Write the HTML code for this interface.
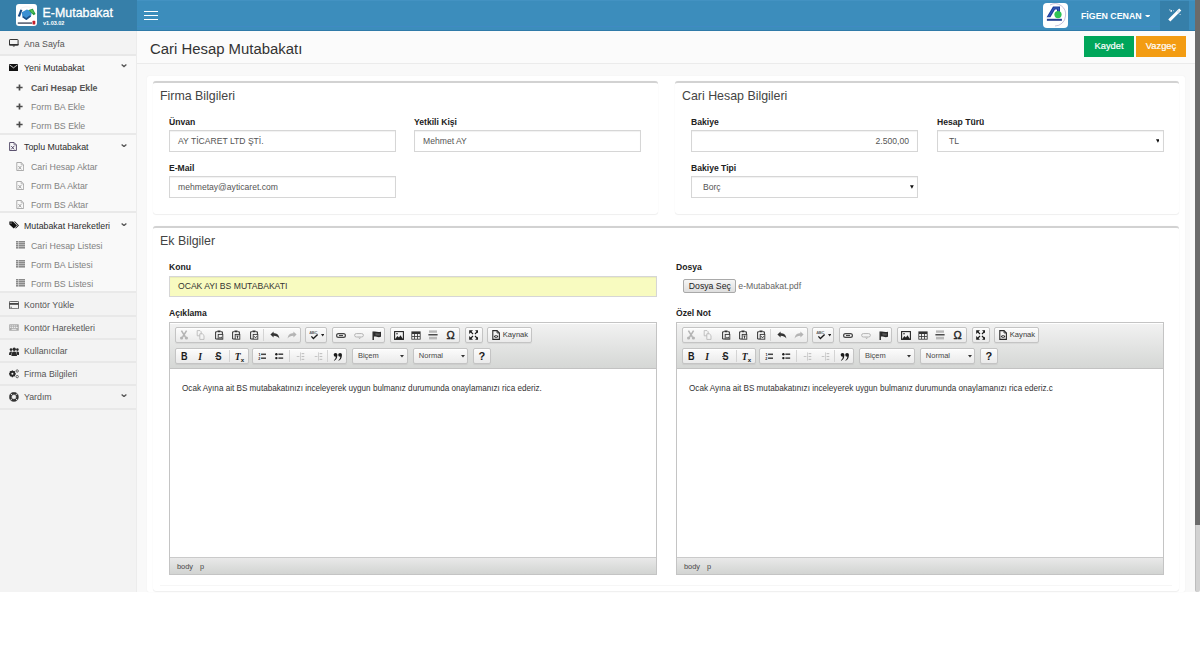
<!DOCTYPE html>
<html><head><meta charset="utf-8"><title>E-Mutabakat</title>
<style>
*{box-sizing:border-box;margin:0;padding:0}
html,body{width:1200px;height:653px;overflow:hidden;background:#fff}
body{font-family:"Liberation Sans",sans-serif;position:relative;color:#333}
.a{position:absolute}
.t{position:absolute;white-space:nowrap;line-height:1}
/* header */
#hl{left:0;top:0;width:137px;height:31px;background:#367fa9}
#hr{left:137px;top:0;width:1058px;height:31px;background:#3c8dbc}
#wand{left:1159.5px;top:0;width:29.7px;height:31px;background:#367fa9}
#sb{left:1195px;top:0;width:5px;height:592px;background:#d2d2d2;border-left:1px solid #bdbdbd;border-radius:0 0 2px 2px}
#sbt{left:1195px;top:0;width:5px;height:525px;background:#6b6b6b}
/* sidebar */
#side{left:0;top:31px;width:137px;height:561px;background:#f3f3f3;border-right:1px solid #ececec}
.sec{position:absolute;left:0;width:136px;background:#f9f9f9;border-bottom:2px solid #e9e9e9}
.it{position:absolute;left:0;width:136px;background:#f3f3f3;border-bottom:2px solid #e8e8e8}
.st{position:absolute;left:24px;font-size:8.8px;color:#555;white-space:nowrap;line-height:1}
.ss{position:absolute;left:31px;font-size:8.8px;color:#828282;white-space:nowrap;line-height:1}
/* content */
#cbg{left:137px;top:31px;width:1058px;height:561px;background:#f9f9f9}
#ph{left:137px;top:31px;width:1058px;height:33px;background:#fbfbfb;border-bottom:1px solid #ebebeb}
#panel{left:147px;top:75.5px;width:1038px;height:516px;background:#fff;border-radius:2px;box-shadow:0 0 1px #e6e6e6}
.box{position:absolute;background:#fff;border-top:2px solid #d2d2d2;border-radius:3px;box-shadow:0 1px 1px rgba(0,0,0,.06), 0 0 1px rgba(0,0,0,.08)}
.bt{position:absolute;font-size:12.4px;color:#444;white-space:nowrap;line-height:1}
.lb{position:absolute;font-size:8.6px;font-weight:bold;color:#222;white-space:nowrap;line-height:1}
.in{position:absolute;height:22px;border:1px solid #d6d6d6;background:#fff;font-size:8.6px;color:#555;line-height:21px;box-shadow:inset 0 1px 1px rgba(0,0,0,.06);padding-left:8px;white-space:nowrap}
.caret{position:absolute;width:0;height:0;border-left:2.5px solid transparent;border-right:2.5px solid transparent;border-top:4px solid #222}
.btn{position:absolute;height:21px;color:#fff;font-size:9.3px;text-align:center;line-height:21px;-webkit-text-stroke:0.2px #fff}
.ed{position:absolute;border:1px solid #c4c4c4;background:#fff}
.tb{position:absolute;background:linear-gradient(#f2f2f2,#d5d7d5);border-bottom:1px solid #c2c2c2;box-shadow:0 1px 0 #fff inset}
.bb{position:absolute;background:linear-gradient(#e9e9e9,#d2d4d2);border-top:1px solid #cacaca}
.grp{position:absolute;border:1px solid #c4c4c4;border-radius:2px;background:linear-gradient(#fcfcfc,#eaeaea);box-shadow:0 1px 0 rgba(255,255,255,.8) inset,0 1px 1px rgba(0,0,0,.06)}
</style></head><body>

<div class="a" id="cbg"></div>
<div class="a" id="ph"></div>
<div class="t" style="left:150px;top:42px;font-size:14.9px;color:#333">Cari Hesap Mutabakatı</div>
<div class="btn" style="left:1084px;top:36px;width:50px;background:#00a65a">Kaydet</div>
<div class="btn" style="left:1136px;top:36px;width:50px;background:#f39c12">Vazgeç</div>

<div class="a" id="panel"></div>

<!-- header -->
<div class="a" id="hl"></div>
<div class="a" id="hr"></div>
<div class="a" id="wand"></div>
<div class="a" style="left:137px;top:26px;width:1022px;height:1px;background:#4189c6;opacity:.7"></div>
<div class="a" style="left:137px;top:0;width:1058px;height:1px;background:#4694c4;opacity:.7"></div>
<div class="t" style="left:42.6px;top:6.8px;font-size:12.4px;color:#fff;-webkit-text-stroke:0.3px #fff">E-Mutabakat</div>
<div class="t" style="left:43px;top:21px;font-size:5.5px;font-weight:bold;color:#fff">v1.03.02</div>
<div class="a" style="left:16px;top:4px;width:21px;height:22px;background:#fff;border-radius:3px"></div>
<div class="a" style="left:144px;top:11px;width:14px;height:1.3px;background:#fff"></div>
<div class="a" style="left:144px;top:14.9px;width:14px;height:1.3px;background:#fff"></div>
<div class="a" style="left:144px;top:18.8px;width:14px;height:1.3px;background:#fff"></div>
<div class="a" style="left:1043px;top:3px;width:25px;height:25px;background:#fff;border-radius:4px"></div>
<div class="t" style="left:1081px;top:12px;font-size:8.8px;font-weight:bold;color:#fff">FİGEN CENAN</div>
<svg class="a" style="left:1144.8px;top:14.6px;width:5.4px;height:2.8px" viewBox="0 0 54 28"><path d="M0 0 H54 L27 28Z" fill="#fff"/></svg>

<div class="a" id="sb"></div>
<div class="a" id="sbt"></div>

<!-- sidebar -->
<div class="a" id="side"></div>
<div class="it" style="top:31px;height:25px"></div>
<div class="st" style="top:40px">Ana Sayfa</div>
<div class="sec" style="top:56px;height:79px"></div>
<div class="st" style="top:64px;color:#2c2c2c">Yeni Mutabakat</div>
<div class="ss" style="top:83.6px;font-weight:bold;color:#555">Cari Hesap Ekle</div>
<div class="ss" style="top:102.6px">Form BA Ekle</div>
<div class="ss" style="top:121.6px">Form BS Ekle</div>
<div class="sec" style="top:135px;height:78px"></div>
<div class="st" style="top:143px;color:#2c2c2c">Toplu Mutabakat</div>
<div class="ss" style="top:162.6px">Cari Hesap Aktar</div>
<div class="ss" style="top:181.6px">Form BA Aktar</div>
<div class="ss" style="top:200.6px">Form BS Aktar</div>
<div class="sec" style="top:213px;height:80px"></div>
<div class="st" style="top:222px;color:#2c2c2c">Mutabakat Hareketleri</div>
<div class="ss" style="top:241.6px">Cari Hesap Listesi</div>
<div class="ss" style="top:260.6px">Form BA Listesi</div>
<div class="ss" style="top:279.6px">Form BS Listesi</div>
<div class="it" style="top:293px;height:24px"></div>
<div class="st" style="top:301px">Kontör Yükle</div>
<div class="it" style="top:317px;height:23px"></div>
<div class="st" style="top:324px">Kontör Hareketleri</div>
<div class="it" style="top:340px;height:23px"></div>
<div class="st" style="top:347px">Kullanıcılar</div>
<div class="it" style="top:363px;height:23px"></div>
<div class="st" style="top:370px">Firma Bilgileri</div>
<div class="it" style="top:386px;height:24px"></div>
<div class="st" style="top:393px">Yardım</div>

<!-- Firma Bilgileri -->
<div class="box" style="left:153px;top:81px;width:505px;height:133px"></div>
<div class="bt" style="left:160px;top:89.6px">Firma Bilgileri</div>
<div class="lb" style="left:169px;top:117.5px">Ünvan</div>
<div class="in" style="left:169px;top:130px;width:227px">AY TİCARET LTD ŞTİ.</div>
<div class="lb" style="left:414px;top:117.5px">Yetkili Kişi</div>
<div class="in" style="left:414px;top:130px;width:227px">Mehmet AY</div>
<div class="lb" style="left:169px;top:163.5px">E-Mail</div>
<div class="in" style="left:169px;top:176px;width:227px">mehmetay@ayticaret.com</div>

<!-- Cari Hesap Bilgileri -->
<div class="box" style="left:675px;top:81px;width:504px;height:133px"></div>
<div class="bt" style="left:682px;top:89.6px">Cari Hesap Bilgileri</div>
<div class="lb" style="left:691px;top:117.5px">Bakiye</div>
<div class="in" style="left:691px;top:130px;width:227px;text-align:right;padding-right:8px">2.500,00</div>
<div class="lb" style="left:937px;top:117.5px">Hesap Türü</div>
<div class="in" style="left:937px;top:130px;width:227px;padding-left:11px">TL</div>
<svg class="a" style="left:1155.6px;top:139.0px;width:3.8px;height:3.8px" viewBox="0 0 38 38"><path d="M0 2 H38 L19 38Z" fill="#111"/></svg>
<div class="lb" style="left:691px;top:163.5px">Bakiye Tipi</div>
<div class="in" style="left:691px;top:176px;width:227px;padding-left:11px">Borç</div>
<svg class="a" style="left:910.0px;top:185.0px;width:3.8px;height:3.8px" viewBox="0 0 38 38"><path d="M0 2 H38 L19 38Z" fill="#111"/></svg>

<!-- Ek Bilgiler -->
<div class="box" style="left:153px;top:226px;width:1026px;height:365.3px"></div>
<div class="a" style="left:160px;top:585px;width:1012px;height:1px;background:#f6f6f6"></div>
<div class="bt" style="left:160px;top:234.6px">Ek Bilgiler</div>
<div class="lb" style="left:169px;top:262.5px">Konu</div>
<div class="in" style="left:169px;top:276px;width:488px;height:21px;background:#f8fbc0;color:#333;line-height:19px">OCAK AYI BS MUTABAKATI</div>
<div class="lb" style="left:676px;top:262.5px">Dosya</div>
<div class="lb" style="left:169px;top:308.5px">Açıklama</div>
<div class="lb" style="left:676px;top:308.5px">Özel Not</div>


<div class="a" style="left:683px;top:279.4px;width:52.5px;height:13.8px;border:1px solid #a9a9a9;border-radius:2px;background:linear-gradient(#f6f6f6,#dedede)"></div>
<div class="t" style="left:688.8px;top:282px;font-size:8.7px;color:#222">Dosya Seç</div>
<div class="t" style="left:738.3px;top:282px;font-size:8.7px;color:#666">e-Mutabakat.pdf</div>
<svg class="a" style="left:9.20px;top:39.20px;width:9.60px;height:8.20px" viewBox="0 0 96 82"><rect x="5" y="5" width="86" height="56" rx="6" fill="none" stroke="#333" stroke-width="10"/><rect x="0" y="50" width="96" height="14" fill="#333"/><path d="M36 64 H60 L56 76 H40Z" fill="#333"/></svg><svg class="a" style="left:9.20px;top:64.00px;width:9.00px;height:7.00px" viewBox="0 0 90 70"><rect x="0" y="0" width="90" height="70" fill="#111"/><path d="M4 8 L45 38 L86 8" stroke="#f7f7f7" stroke-width="8" fill="none"/></svg><svg class="a" style="left:16.30px;top:83.80px;width:7.00px;height:7.00px" viewBox="0 0 70 70"><path d="M35 4 V66 M4 35 H66" stroke="#4a4a4a" stroke-width="17"/></svg><svg class="a" style="left:16.30px;top:102.50px;width:7.00px;height:7.00px" viewBox="0 0 70 70"><path d="M35 4 V66 M4 35 H66" stroke="#4a4a4a" stroke-width="17"/></svg><svg class="a" style="left:16.30px;top:121.20px;width:7.00px;height:7.00px" viewBox="0 0 70 70"><path d="M35 4 V66 M4 35 H66" stroke="#4a4a4a" stroke-width="17"/></svg><svg class="a" style="left:9.20px;top:142.20px;width:8.00px;height:9.00px" viewBox="0 0 80 90"><path d="M6 5 H50 L74 29 V85 H6 Z" fill="none" stroke="#4a4060" stroke-width="9"/><path d="M50 5 V29 H74" fill="none" stroke="#4a4060" stroke-width="6"/><path d="M22 40 L52 74 M52 40 L22 74" stroke="#4a4060" stroke-width="9"/></svg><svg class="a" style="left:16.00px;top:162.10px;width:8.40px;height:9.00px" viewBox="0 0 80 90"><path d="M6 5 H50 L74 29 V85 H6 Z" fill="none" stroke="#999" stroke-width="8"/><path d="M50 5 V29 H74" fill="none" stroke="#999" stroke-width="6"/><path d="M22 40 L52 74 M52 40 L22 74" stroke="#999" stroke-width="9"/></svg><svg class="a" style="left:16.00px;top:181.10px;width:8.40px;height:9.00px" viewBox="0 0 80 90"><path d="M6 5 H50 L74 29 V85 H6 Z" fill="none" stroke="#999" stroke-width="8"/><path d="M50 5 V29 H74" fill="none" stroke="#999" stroke-width="6"/><path d="M22 40 L52 74 M52 40 L22 74" stroke="#999" stroke-width="9"/></svg><svg class="a" style="left:16.00px;top:200.10px;width:8.40px;height:9.00px" viewBox="0 0 80 90"><path d="M6 5 H50 L74 29 V85 H6 Z" fill="none" stroke="#999" stroke-width="8"/><path d="M50 5 V29 H74" fill="none" stroke="#999" stroke-width="6"/><path d="M22 40 L52 74 M52 40 L22 74" stroke="#999" stroke-width="9"/></svg><svg class="a" style="left:8.50px;top:220.60px;width:10.40px;height:8.60px" viewBox="0 0 104 86"><path d="M4 4 H40 L80 44 L48 76 L4 34 Z" fill="#111"/><circle cx="20" cy="20" r="6" fill="#f7f7f7"/><path d="M50 4 H60 L100 44 L68 76 L62 70 L88 44Z" fill="#111"/></svg><svg class="a" style="left:16.00px;top:241.20px;width:9.00px;height:7.60px" viewBox="0 0 90 76"><g fill="#8a8a8a"><rect x="0" y="0" width="22" height="16"/><rect x="0" y="20" width="22" height="16"/><rect x="0" y="40" width="22" height="16"/><rect x="0" y="60" width="22" height="16"/><rect x="26" y="0" width="64" height="16"/><rect x="26" y="20" width="64" height="16"/><rect x="26" y="40" width="64" height="16"/><rect x="26" y="60" width="64" height="16"/></g></svg><svg class="a" style="left:16.00px;top:260.20px;width:9.00px;height:7.60px" viewBox="0 0 90 76"><g fill="#8a8a8a"><rect x="0" y="0" width="22" height="16"/><rect x="0" y="20" width="22" height="16"/><rect x="0" y="40" width="22" height="16"/><rect x="0" y="60" width="22" height="16"/><rect x="26" y="0" width="64" height="16"/><rect x="26" y="20" width="64" height="16"/><rect x="26" y="40" width="64" height="16"/><rect x="26" y="60" width="64" height="16"/></g></svg><svg class="a" style="left:16.00px;top:279.20px;width:9.00px;height:7.60px" viewBox="0 0 90 76"><g fill="#8a8a8a"><rect x="0" y="0" width="22" height="16"/><rect x="0" y="20" width="22" height="16"/><rect x="0" y="40" width="22" height="16"/><rect x="0" y="60" width="22" height="16"/><rect x="26" y="0" width="64" height="16"/><rect x="26" y="20" width="64" height="16"/><rect x="26" y="40" width="64" height="16"/><rect x="26" y="60" width="64" height="16"/></g></svg><svg class="a" style="left:9.00px;top:300.80px;width:10.00px;height:8.20px" viewBox="0 0 100 82"><rect x="4" y="4" width="92" height="74" rx="8" fill="none" stroke="#444" stroke-width="9"/><rect x="4" y="20" width="92" height="18" fill="#444"/><rect x="14" y="58" width="16" height="8" fill="#444"/></svg><svg class="a" style="left:9.00px;top:324.30px;width:10.00px;height:7.00px" viewBox="0 0 100 70"><rect x="2" y="2" width="96" height="66" rx="6" fill="#aaa"/><g fill="#eee"><rect x="12" y="14" width="12" height="10"/><rect x="30" y="14" width="12" height="10"/><rect x="48" y="14" width="12" height="10"/><rect x="66" y="14" width="12" height="10"/><rect x="12" y="30" width="12" height="10"/><rect x="30" y="30" width="12" height="10"/><rect x="48" y="30" width="12" height="10"/><rect x="66" y="30" width="20" height="10"/><rect x="26" y="48" width="48" height="10"/></g></svg><svg class="a" style="left:9.00px;top:346.60px;width:10.40px;height:9.00px" viewBox="0 0 104 90"><g fill="#2a2a2a"><circle cx="52" cy="22" r="17"/><circle cx="20" cy="26" r="13"/><circle cx="84" cy="26" r="13"/><path d="M24 90 C24 56 34 44 52 44 C70 44 80 56 80 90Z"/><path d="M0 80 C0 54 8 44 20 44 C28 44 32 48 32 48 C26 58 22 68 22 80Z"/><path d="M104 80 C104 54 96 44 84 44 C76 44 72 48 72 48 C78 58 82 68 82 80Z"/></g></svg><svg class="a" style="left:9.00px;top:369.20px;width:10.40px;height:9.40px" viewBox="0 0 104 94"><circle cx="34" cy="48" r="22" fill="none" stroke="#2a2a2a" stroke-width="16"/><g stroke="#2a2a2a" stroke-width="12"><path d="M34 14 V82 M0 48 H68 M10 24 L58 72 M58 24 L10 72"/></g><circle cx="34" cy="48" r="10" fill="#f3f3f3"/><circle cx="82" cy="20" r="12" fill="none" stroke="#555" stroke-width="9"/><circle cx="82" cy="76" r="12" fill="none" stroke="#555" stroke-width="9"/></svg><svg class="a" style="left:9.00px;top:392.00px;width:9.80px;height:9.80px" viewBox="0 0 100 100"><circle cx="50" cy="50" r="36" fill="none" stroke="#333" stroke-width="22"/><circle cx="50" cy="50" r="14" fill="#f3f3f3"/><g stroke="#f3f3f3" stroke-width="9"><path d="M36 36 L14 14 M64 36 L86 14 M36 64 L14 86 M64 64 L86 86"/></g><circle cx="50" cy="50" r="48" fill="none" stroke="#333" stroke-width="4"/><circle cx="50" cy="50" r="24" fill="none" stroke="#333" stroke-width="4"/></svg><svg class="a" style="left:121.00px;top:64.20px;width:6.00px;height:3.40px" viewBox="0 0 60 34"><path d="M6 6 L30 26 L54 6" stroke="#555" stroke-width="13" fill="none"/></svg><svg class="a" style="left:121.00px;top:143.60px;width:6.00px;height:3.40px" viewBox="0 0 60 34"><path d="M6 6 L30 26 L54 6" stroke="#555" stroke-width="13" fill="none"/></svg><svg class="a" style="left:121.00px;top:222.80px;width:6.00px;height:3.40px" viewBox="0 0 60 34"><path d="M6 6 L30 26 L54 6" stroke="#555" stroke-width="13" fill="none"/></svg><svg class="a" style="left:121.00px;top:393.80px;width:6.00px;height:3.40px" viewBox="0 0 60 34"><path d="M6 6 L30 26 L54 6" stroke="#555" stroke-width="13" fill="none"/></svg><svg class="a" style="left:16.00px;top:4.00px;width:21.30px;height:22.00px" viewBox="0 0 213 220"><path d="M50 45 C80 22 140 22 175 50" stroke="#e4e4e4" stroke-width="4" fill="none"/><path d="M58 82 L108 56 L160 72 L150 125 L104 160 L64 132Z" fill="#3a8fd2"/><path d="M64 132 L104 160 L150 125 L140 112 L102 140 L74 120Z" fill="#1c4f86"/><path d="M18 122 L44 56 L64 60 L40 128Z" fill="#1a4a82"/><path d="M126 60 L168 48 L196 100 L176 112 L150 84Z" fill="#239a3c"/><path d="M140 64 L164 58 L182 92 L160 88Z" fill="#52c05a"/><rect x="18" y="183" width="142" height="16" fill="#5b6273"/><rect x="165" y="168" width="28" height="36" rx="6" fill="#c4202c"/></svg><svg class="a" style="left:1043.00px;top:3.30px;width:25.00px;height:24.50px" viewBox="0 0 250 245"><path d="M70 20 A106 106 0 0 1 225 130 A106 106 0 0 1 120 230" stroke="#8f84b8" stroke-width="5" fill="none"/><path d="M36 142 L100 36 L170 36 L170 90 L140 90 L140 64 L120 64 L74 142Z" fill="#1c3c9c"/><path d="M56 138 L110 50 L156 50 L156 80" stroke="#5d8fe0" stroke-width="4" fill="none"/><circle cx="150" cy="116" r="36" fill="#2fc455"/><rect x="39" y="158" width="150" height="20" fill="#233f8f"/></svg><svg class="a" style="left:1166.50px;top:6.50px;width:15.00px;height:15.00px" viewBox="0 0 160 160"><path d="M36 132 L130 38" stroke="#fff" stroke-width="32" stroke-linecap="square"/><path d="M110 58 L130 38" stroke="#dfe8f0" stroke-width="30"/><circle cx="45" cy="42" r="9" fill="#fff"/><circle cx="30" cy="30" r="6" fill="#dfeaf5"/><circle cx="70" cy="40" r="5" fill="#fff"/><circle cx="140" cy="80" r="6" fill="#dfeaf5"/></svg><div class="a" style="left:0;top:30px;width:1195px;height:1px;background:#2f7aa8"></div><div class="ed" style="left:169px;top:322px;width:488px;height:253px"></div><div class="tb" style="left:170px;top:323px;width:486px;height:45.5px"></div><div class="a" style="left:170px;top:368.5px;width:486px;height:188.5px;background:#fff"></div><div class="bb" style="left:170px;top:557px;width:486px;height:17px"></div><div class="grp" style="left:174.50px;top:326.80px;width:126.30px;height:16.6px"></div><div class="grp" style="left:305.40px;top:326.80px;width:22.10px;height:16.6px"></div><div class="grp" style="left:332.00px;top:326.80px;width:53.00px;height:16.6px"></div><div class="grp" style="left:389.60px;top:326.80px;width:70.80px;height:16.6px"></div><div class="grp" style="left:464.60px;top:326.80px;width:18.00px;height:16.6px"></div><div class="grp" style="left:487.00px;top:326.80px;width:45.00px;height:16.6px"></div><div class="grp" style="left:174.50px;top:347.90px;width:74.00px;height:16.6px"></div><div class="grp" style="left:252.20px;top:347.90px;width:94.80px;height:16.6px"></div><div class="grp" style="left:351.70px;top:347.90px;width:56.20px;height:16.6px"></div><div class="grp" style="left:412.50px;top:347.90px;width:55.80px;height:16.6px"></div><div class="grp" style="left:472.50px;top:347.90px;width:18.30px;height:16.6px"></div><div class="a" style="left:263.00px;top:329.30px;width:1px;height:11.5px;background:#d4d4d4"></div><div class="a" style="left:229.00px;top:350.40px;width:1px;height:11.5px;background:#d4d4d4"></div><div class="a" style="left:289.30px;top:350.40px;width:1px;height:11.5px;background:#d4d4d4"></div><div class="a" style="left:327.20px;top:350.40px;width:1px;height:11.5px;background:#d4d4d4"></div><svg class="a" style="left:179.30px;top:330.00px;width:10px;height:10px" viewBox="0 0 100 100"><g stroke="#b4b4b4" stroke-width="15" fill="none"><path d="M24 6 L64 70 M76 6 L36 70"/></g><g fill="#b4b4b4"><circle cx="26" cy="80" r="16"/><circle cx="74" cy="80" r="16"/></g></svg><svg class="a" style="left:195.90px;top:330.00px;width:10px;height:10px" viewBox="0 0 100 100"><g stroke="#b4b4b4" stroke-width="8" fill="none"><path d="M12 6 H40 L52 18 V58 H12 Z"/><path d="M38 38 H64 L80 54 V94 H38 Z" fill="#f4f4f4"/></g></svg><svg class="a" style="left:213.80px;top:330.00px;width:10px;height:10px" viewBox="0 0 100 100"><g fill="none" stroke="#333" stroke-width="10"><path d="M30 18 H16 V90 H40"/><path d="M70 18 H84 V40"/></g><rect x="32" y="6" width="36" height="16" rx="6" fill="#333"/><rect x="42" y="44" width="46" height="48" fill="none" stroke="#333" stroke-width="9"/><path d="M48 86 L58 68 L66 78 L72 64 L84 86Z" fill="#333"/></svg><svg class="a" style="left:231.30px;top:330.00px;width:10px;height:10px" viewBox="0 0 100 100"><g fill="none" stroke="#333" stroke-width="10"><path d="M30 18 H16 V90 H40"/><path d="M70 18 H84 V40"/></g><rect x="32" y="6" width="36" height="16" rx="6" fill="#333"/><rect x="42" y="44" width="46" height="48" fill="none" stroke="#333" stroke-width="9"/><path d="M54 60 H76 M65 60 V86" stroke="#333" stroke-width="9"/></svg><svg class="a" style="left:248.80px;top:330.00px;width:10px;height:10px" viewBox="0 0 100 100"><g fill="none" stroke="#333" stroke-width="10"><path d="M30 18 H16 V90 H40"/><path d="M70 18 H84 V40"/></g><rect x="32" y="6" width="36" height="16" rx="6" fill="#333"/><rect x="42" y="44" width="46" height="48" fill="none" stroke="#333" stroke-width="9"/><path d="M50 62 L65 78 L80 62" stroke="#333" stroke-width="10" fill="none"/></svg><svg class="a" style="left:269.60px;top:330.00px;width:10px;height:10px" viewBox="0 0 100 100"><path d="M4 44 L36 14 V32 C64 32 90 44 94 86 C80 66 62 58 36 58 V76 Z" fill="#333"/></svg><svg class="a" style="left:286.70px;top:330.00px;width:10px;height:10px" viewBox="0 0 100 100"><path d="M96 44 L64 14 V32 C36 32 10 44 6 86 C20 66 38 58 64 58 V76 Z" fill="#b4b4b4"/></svg><svg class="a" style="left:309.00px;top:330.00px;width:10px;height:10px" viewBox="0 0 100 100"><text x="2" y="40" font-family="Liberation Sans" font-weight="bold" font-size="40" fill="#666" textLength="82">ABC</text><path d="M24 64 L44 86 L86 46" stroke="#1a1a1a" stroke-width="14" fill="none"/></svg><svg class="a" style="left:320.60px;top:334.20px;width:3.4px;height:2.4px" viewBox="0 0 34 24"><path d="M0 0 H34 L17 24Z" fill="#222"/></svg><svg class="a" style="left:336.10px;top:332.50px;width:10px;height:5px" viewBox="0 0 100 50"><rect x="6" y="6" width="88" height="38" rx="19" fill="none" stroke="#444" stroke-width="12"/><rect x="30" y="19" width="40" height="12" fill="#444"/></svg><svg class="a" style="left:353.90px;top:332.50px;width:10px;height:6.6px" viewBox="0 0 100 66"><rect x="6" y="6" width="88" height="34" rx="17" fill="none" stroke="#b4b4b4" stroke-width="10"/><path d="M48 44 L64 62 M64 44 L48 62" stroke="#b4b4b4" stroke-width="8"/></svg><svg class="a" style="left:371.60px;top:330.50px;width:9px;height:9px" viewBox="0 0 90 90"><path d="M12 4 V96" stroke="#222" stroke-width="14"/><path d="M16 8 C36 0 56 18 92 6 V58 C58 70 38 50 16 58 Z" fill="#2a2a2a"/><path d="M34 20 C50 22 62 28 78 22 V44 C62 50 50 42 34 42Z" fill="#555"/></svg><svg class="a" style="left:393.80px;top:330.50px;width:10px;height:9px" viewBox="0 0 100 90"><rect x="6" y="6" width="88" height="78" fill="none" stroke="#222" stroke-width="11"/><path d="M12 80 L34 50 L50 66 L64 42 L90 80 Z" fill="#222"/><circle cx="30" cy="28" r="8" fill="#222"/></svg><svg class="a" style="left:411.30px;top:330.50px;width:10px;height:9px" viewBox="0 0 100 90"><rect x="4" y="4" width="92" height="82" fill="#333"/><g fill="#f0f0f0"><rect x="12" y="30" width="20" height="20"/><rect x="40" y="30" width="20" height="20"/><rect x="68" y="30" width="20" height="20"/><rect x="12" y="58" width="20" height="20"/><rect x="40" y="58" width="20" height="20"/><rect x="68" y="58" width="20" height="20"/></g></svg><svg class="a" style="left:428.30px;top:330.00px;width:10px;height:10px" viewBox="0 0 100 100"><rect x="10" y="4" width="80" height="24" fill="#b8b8b8"/><rect x="4" y="42" width="92" height="12" fill="#222"/><rect x="10" y="68" width="80" height="26" fill="#b8b8b8"/></svg><div class="t" style="left:446.60px;top:330.00px;font-size:11px;color:#1a1a1a;-webkit-text-stroke:0.35px #1a1a1a">Ω</div><svg class="a" style="left:468.50px;top:330.20px;width:9.6px;height:9.6px" viewBox="0 0 96 96"><g fill="#1a1a1a"><path d="M2 2 H40 L2 40Z"/><path d="M98 2 H60 L98 40Z"/><path d="M2 98 H40 L2 60Z"/><path d="M98 98 H60 L98 60Z"/></g><g stroke="#1a1a1a" stroke-width="12"><path d="M14 14 L40 40 M86 14 L60 40 M14 86 L40 60 M86 86 L60 60"/></g></svg><svg class="a" style="left:491.80px;top:330.00px;width:8px;height:10px" viewBox="0 0 80 100"><path d="M8 6 H50 L74 30 V94 H8 Z" fill="none" stroke="#2a2a2a" stroke-width="11"/><path d="M50 6 V30 H74" fill="none" stroke="#2a2a2a" stroke-width="8"/><path d="M18 66 C28 48 54 48 64 66 C54 84 28 84 18 66Z" fill="#2a2a2a"/><circle cx="41" cy="66" r="8" fill="#eee"/></svg><div class="t" style="left:502.80px;top:330.60px;font-size:7.6px;color:#3a3a3a">Kaynak</div><div class="t" style="left:181.00px;top:352.80px;font-size:9.1px;font-weight:bold;color:#1a1a1a;transform:scaleY(1.13);transform-origin:0 100%;">B</div><div class="t" style="left:198.20px;top:351.60px;font-size:9.6px;font-weight:bold;font-style:italic;font-family:'Liberation Serif';color:#1a1a1a;transform:scaleY(1.13);transform-origin:0 100%;">I</div><div class="t" style="left:215.60px;top:352.80px;font-size:9.1px;font-weight:bold;color:#1a1a1a;transform:scaleY(1.13);transform-origin:0 100%;">S</div><div class="a" style="left:214.80px;top:356.40px;width:4px;height:0.8px;background:#555"></div><div class="t" style="left:234.80px;top:351.60px;font-size:9.6px;font-weight:bold;font-style:italic;font-family:'Liberation Serif';color:#1a1a1a;transform:scaleY(1.13);transform-origin:0 100%;">T</div><div class="t" style="left:240.80px;top:356.80px;font-size:6.2px;font-weight:bold;color:#1a1a1a">x</div><svg class="a" style="left:257.55px;top:351.95px;width:8.5px;height:8.5px" viewBox="0 0 100 100"><text x="6" y="42" font-family="Liberation Sans" font-weight="bold" font-size="44" fill="#222">1</text><text x="2" y="96" font-family="Liberation Sans" font-weight="bold" font-size="44" fill="#222">2</text><rect x="36" y="18" width="58" height="18" fill="#444"/><rect x="36" y="64" width="58" height="18" fill="#444"/></svg><svg class="a" style="left:275.35px;top:351.95px;width:8.5px;height:8.5px" viewBox="0 0 100 100"><circle cx="16" cy="26" r="14" fill="#1a1a1a"/><circle cx="16" cy="72" r="14" fill="#1a1a1a"/><rect x="40" y="17" width="56" height="18" fill="#444"/><rect x="40" y="63" width="56" height="18" fill="#444"/></svg><svg class="a" style="left:296.30px;top:351.70px;width:9px;height:9px" viewBox="0 0 100 100"><g fill="#c0c0c0"><rect x="46" y="4" width="8" height="92"/><rect x="62" y="12" width="30" height="12"/><rect x="62" y="44" width="30" height="12"/><rect x="62" y="76" width="30" height="12"/><rect x="8" y="45" width="30" height="10"/></g></svg><svg class="a" style="left:313.80px;top:351.70px;width:9px;height:9px" viewBox="0 0 100 100"><g fill="#c0c0c0"><rect x="46" y="4" width="8" height="92"/><rect x="62" y="12" width="30" height="12"/><rect x="62" y="44" width="30" height="12"/><rect x="62" y="76" width="30" height="12"/><rect x="8" y="45" width="30" height="10"/></g></svg><svg class="a" style="left:333.20px;top:351.70px;width:10px;height:9.4px" viewBox="0 0 100 100"><g fill="#1a1a1a"><circle cx="24" cy="30" r="20"/><path d="M42 32 C44 66 30 86 6 96 L10 84 C22 74 28 62 26 44Z"/><circle cx="72" cy="30" r="20"/><path d="M90 32 C92 66 78 86 54 96 L58 84 C70 74 76 62 74 44Z"/></g></svg><div class="t" style="left:357.90px;top:351.90px;font-size:7.5px;color:#484848">Biçem</div><svg class="a" style="left:400.20px;top:355.40px;width:4px;height:2.6px" viewBox="0 0 40 26"><path d="M0 0 H40 L20 26Z" fill="#333"/></svg><div class="t" style="left:418.80px;top:351.90px;font-size:7.5px;color:#484848">Normal</div><svg class="a" style="left:460.60px;top:355.40px;width:4px;height:2.6px" viewBox="0 0 40 26"><path d="M0 0 H40 L20 26Z" fill="#333"/></svg><div class="t" style="left:478.40px;top:350.60px;font-size:11px;font-weight:bold;color:#1a1a1a">?</div><div class="t" style="left:182px;top:384.8px;font-size:8.14px;color:#333">Ocak Ayına ait BS mutabakatınızı inceleyerek uygun bulmanız durumunda onaylamanızı rica ederiz.</div><div class="t" style="left:177px;top:562.5px;font-size:7.4px;color:#484848">body</div><div class="t" style="left:200px;top:562.5px;font-size:7.4px;color:#484848">p</div><div class="ed" style="left:676px;top:322px;width:488px;height:253px"></div><div class="tb" style="left:677px;top:323px;width:486px;height:45.5px"></div><div class="a" style="left:677px;top:368.5px;width:486px;height:188.5px;background:#fff"></div><div class="bb" style="left:677px;top:557px;width:486px;height:17px"></div><div class="grp" style="left:681.50px;top:326.80px;width:126.30px;height:16.6px"></div><div class="grp" style="left:812.40px;top:326.80px;width:22.10px;height:16.6px"></div><div class="grp" style="left:839.00px;top:326.80px;width:53.00px;height:16.6px"></div><div class="grp" style="left:896.60px;top:326.80px;width:70.80px;height:16.6px"></div><div class="grp" style="left:971.60px;top:326.80px;width:18.00px;height:16.6px"></div><div class="grp" style="left:994.00px;top:326.80px;width:45.00px;height:16.6px"></div><div class="grp" style="left:681.50px;top:347.90px;width:74.00px;height:16.6px"></div><div class="grp" style="left:759.20px;top:347.90px;width:94.80px;height:16.6px"></div><div class="grp" style="left:858.70px;top:347.90px;width:56.20px;height:16.6px"></div><div class="grp" style="left:919.50px;top:347.90px;width:55.80px;height:16.6px"></div><div class="grp" style="left:979.50px;top:347.90px;width:18.30px;height:16.6px"></div><div class="a" style="left:770.00px;top:329.30px;width:1px;height:11.5px;background:#d4d4d4"></div><div class="a" style="left:736.00px;top:350.40px;width:1px;height:11.5px;background:#d4d4d4"></div><div class="a" style="left:796.30px;top:350.40px;width:1px;height:11.5px;background:#d4d4d4"></div><div class="a" style="left:834.20px;top:350.40px;width:1px;height:11.5px;background:#d4d4d4"></div><svg class="a" style="left:686.30px;top:330.00px;width:10px;height:10px" viewBox="0 0 100 100"><g stroke="#b4b4b4" stroke-width="15" fill="none"><path d="M24 6 L64 70 M76 6 L36 70"/></g><g fill="#b4b4b4"><circle cx="26" cy="80" r="16"/><circle cx="74" cy="80" r="16"/></g></svg><svg class="a" style="left:702.90px;top:330.00px;width:10px;height:10px" viewBox="0 0 100 100"><g stroke="#b4b4b4" stroke-width="8" fill="none"><path d="M12 6 H40 L52 18 V58 H12 Z"/><path d="M38 38 H64 L80 54 V94 H38 Z" fill="#f4f4f4"/></g></svg><svg class="a" style="left:720.80px;top:330.00px;width:10px;height:10px" viewBox="0 0 100 100"><g fill="none" stroke="#333" stroke-width="10"><path d="M30 18 H16 V90 H40"/><path d="M70 18 H84 V40"/></g><rect x="32" y="6" width="36" height="16" rx="6" fill="#333"/><rect x="42" y="44" width="46" height="48" fill="none" stroke="#333" stroke-width="9"/><path d="M48 86 L58 68 L66 78 L72 64 L84 86Z" fill="#333"/></svg><svg class="a" style="left:738.30px;top:330.00px;width:10px;height:10px" viewBox="0 0 100 100"><g fill="none" stroke="#333" stroke-width="10"><path d="M30 18 H16 V90 H40"/><path d="M70 18 H84 V40"/></g><rect x="32" y="6" width="36" height="16" rx="6" fill="#333"/><rect x="42" y="44" width="46" height="48" fill="none" stroke="#333" stroke-width="9"/><path d="M54 60 H76 M65 60 V86" stroke="#333" stroke-width="9"/></svg><svg class="a" style="left:755.80px;top:330.00px;width:10px;height:10px" viewBox="0 0 100 100"><g fill="none" stroke="#333" stroke-width="10"><path d="M30 18 H16 V90 H40"/><path d="M70 18 H84 V40"/></g><rect x="32" y="6" width="36" height="16" rx="6" fill="#333"/><rect x="42" y="44" width="46" height="48" fill="none" stroke="#333" stroke-width="9"/><path d="M50 62 L65 78 L80 62" stroke="#333" stroke-width="10" fill="none"/></svg><svg class="a" style="left:776.60px;top:330.00px;width:10px;height:10px" viewBox="0 0 100 100"><path d="M4 44 L36 14 V32 C64 32 90 44 94 86 C80 66 62 58 36 58 V76 Z" fill="#333"/></svg><svg class="a" style="left:793.70px;top:330.00px;width:10px;height:10px" viewBox="0 0 100 100"><path d="M96 44 L64 14 V32 C36 32 10 44 6 86 C20 66 38 58 64 58 V76 Z" fill="#b4b4b4"/></svg><svg class="a" style="left:816.00px;top:330.00px;width:10px;height:10px" viewBox="0 0 100 100"><text x="2" y="40" font-family="Liberation Sans" font-weight="bold" font-size="40" fill="#666" textLength="82">ABC</text><path d="M24 64 L44 86 L86 46" stroke="#1a1a1a" stroke-width="14" fill="none"/></svg><svg class="a" style="left:827.60px;top:334.20px;width:3.4px;height:2.4px" viewBox="0 0 34 24"><path d="M0 0 H34 L17 24Z" fill="#222"/></svg><svg class="a" style="left:843.10px;top:332.50px;width:10px;height:5px" viewBox="0 0 100 50"><rect x="6" y="6" width="88" height="38" rx="19" fill="none" stroke="#444" stroke-width="12"/><rect x="30" y="19" width="40" height="12" fill="#444"/></svg><svg class="a" style="left:860.90px;top:332.50px;width:10px;height:6.6px" viewBox="0 0 100 66"><rect x="6" y="6" width="88" height="34" rx="17" fill="none" stroke="#b4b4b4" stroke-width="10"/><path d="M48 44 L64 62 M64 44 L48 62" stroke="#b4b4b4" stroke-width="8"/></svg><svg class="a" style="left:878.60px;top:330.50px;width:9px;height:9px" viewBox="0 0 90 90"><path d="M12 4 V96" stroke="#222" stroke-width="14"/><path d="M16 8 C36 0 56 18 92 6 V58 C58 70 38 50 16 58 Z" fill="#2a2a2a"/><path d="M34 20 C50 22 62 28 78 22 V44 C62 50 50 42 34 42Z" fill="#555"/></svg><svg class="a" style="left:900.80px;top:330.50px;width:10px;height:9px" viewBox="0 0 100 90"><rect x="6" y="6" width="88" height="78" fill="none" stroke="#222" stroke-width="11"/><path d="M12 80 L34 50 L50 66 L64 42 L90 80 Z" fill="#222"/><circle cx="30" cy="28" r="8" fill="#222"/></svg><svg class="a" style="left:918.30px;top:330.50px;width:10px;height:9px" viewBox="0 0 100 90"><rect x="4" y="4" width="92" height="82" fill="#333"/><g fill="#f0f0f0"><rect x="12" y="30" width="20" height="20"/><rect x="40" y="30" width="20" height="20"/><rect x="68" y="30" width="20" height="20"/><rect x="12" y="58" width="20" height="20"/><rect x="40" y="58" width="20" height="20"/><rect x="68" y="58" width="20" height="20"/></g></svg><svg class="a" style="left:935.30px;top:330.00px;width:10px;height:10px" viewBox="0 0 100 100"><rect x="10" y="4" width="80" height="24" fill="#b8b8b8"/><rect x="4" y="42" width="92" height="12" fill="#222"/><rect x="10" y="68" width="80" height="26" fill="#b8b8b8"/></svg><div class="t" style="left:953.60px;top:330.00px;font-size:11px;color:#1a1a1a;-webkit-text-stroke:0.35px #1a1a1a">Ω</div><svg class="a" style="left:975.50px;top:330.20px;width:9.6px;height:9.6px" viewBox="0 0 96 96"><g fill="#1a1a1a"><path d="M2 2 H40 L2 40Z"/><path d="M98 2 H60 L98 40Z"/><path d="M2 98 H40 L2 60Z"/><path d="M98 98 H60 L98 60Z"/></g><g stroke="#1a1a1a" stroke-width="12"><path d="M14 14 L40 40 M86 14 L60 40 M14 86 L40 60 M86 86 L60 60"/></g></svg><svg class="a" style="left:998.80px;top:330.00px;width:8px;height:10px" viewBox="0 0 80 100"><path d="M8 6 H50 L74 30 V94 H8 Z" fill="none" stroke="#2a2a2a" stroke-width="11"/><path d="M50 6 V30 H74" fill="none" stroke="#2a2a2a" stroke-width="8"/><path d="M18 66 C28 48 54 48 64 66 C54 84 28 84 18 66Z" fill="#2a2a2a"/><circle cx="41" cy="66" r="8" fill="#eee"/></svg><div class="t" style="left:1009.80px;top:330.60px;font-size:7.6px;color:#3a3a3a">Kaynak</div><div class="t" style="left:688.00px;top:352.80px;font-size:9.1px;font-weight:bold;color:#1a1a1a;transform:scaleY(1.13);transform-origin:0 100%;">B</div><div class="t" style="left:705.20px;top:351.60px;font-size:9.6px;font-weight:bold;font-style:italic;font-family:'Liberation Serif';color:#1a1a1a;transform:scaleY(1.13);transform-origin:0 100%;">I</div><div class="t" style="left:722.60px;top:352.80px;font-size:9.1px;font-weight:bold;color:#1a1a1a;transform:scaleY(1.13);transform-origin:0 100%;">S</div><div class="a" style="left:721.80px;top:356.40px;width:4px;height:0.8px;background:#555"></div><div class="t" style="left:741.80px;top:351.60px;font-size:9.6px;font-weight:bold;font-style:italic;font-family:'Liberation Serif';color:#1a1a1a;transform:scaleY(1.13);transform-origin:0 100%;">T</div><div class="t" style="left:747.80px;top:356.80px;font-size:6.2px;font-weight:bold;color:#1a1a1a">x</div><svg class="a" style="left:764.55px;top:351.95px;width:8.5px;height:8.5px" viewBox="0 0 100 100"><text x="6" y="42" font-family="Liberation Sans" font-weight="bold" font-size="44" fill="#222">1</text><text x="2" y="96" font-family="Liberation Sans" font-weight="bold" font-size="44" fill="#222">2</text><rect x="36" y="18" width="58" height="18" fill="#444"/><rect x="36" y="64" width="58" height="18" fill="#444"/></svg><svg class="a" style="left:782.35px;top:351.95px;width:8.5px;height:8.5px" viewBox="0 0 100 100"><circle cx="16" cy="26" r="14" fill="#1a1a1a"/><circle cx="16" cy="72" r="14" fill="#1a1a1a"/><rect x="40" y="17" width="56" height="18" fill="#444"/><rect x="40" y="63" width="56" height="18" fill="#444"/></svg><svg class="a" style="left:803.30px;top:351.70px;width:9px;height:9px" viewBox="0 0 100 100"><g fill="#c0c0c0"><rect x="46" y="4" width="8" height="92"/><rect x="62" y="12" width="30" height="12"/><rect x="62" y="44" width="30" height="12"/><rect x="62" y="76" width="30" height="12"/><rect x="8" y="45" width="30" height="10"/></g></svg><svg class="a" style="left:820.80px;top:351.70px;width:9px;height:9px" viewBox="0 0 100 100"><g fill="#c0c0c0"><rect x="46" y="4" width="8" height="92"/><rect x="62" y="12" width="30" height="12"/><rect x="62" y="44" width="30" height="12"/><rect x="62" y="76" width="30" height="12"/><rect x="8" y="45" width="30" height="10"/></g></svg><svg class="a" style="left:840.20px;top:351.70px;width:10px;height:9.4px" viewBox="0 0 100 100"><g fill="#1a1a1a"><circle cx="24" cy="30" r="20"/><path d="M42 32 C44 66 30 86 6 96 L10 84 C22 74 28 62 26 44Z"/><circle cx="72" cy="30" r="20"/><path d="M90 32 C92 66 78 86 54 96 L58 84 C70 74 76 62 74 44Z"/></g></svg><div class="t" style="left:864.90px;top:351.90px;font-size:7.5px;color:#484848">Biçem</div><svg class="a" style="left:907.20px;top:355.40px;width:4px;height:2.6px" viewBox="0 0 40 26"><path d="M0 0 H40 L20 26Z" fill="#333"/></svg><div class="t" style="left:925.80px;top:351.90px;font-size:7.5px;color:#484848">Normal</div><svg class="a" style="left:967.60px;top:355.40px;width:4px;height:2.6px" viewBox="0 0 40 26"><path d="M0 0 H40 L20 26Z" fill="#333"/></svg><div class="t" style="left:985.40px;top:350.60px;font-size:11px;font-weight:bold;color:#1a1a1a">?</div><div class="t" style="left:689px;top:384.8px;font-size:8.14px;color:#333">Ocak Ayına ait BS mutabakatınızı inceleyerek uygun bulmanız durumunda onaylamanızı rica ederiz.c</div><div class="t" style="left:684px;top:562.5px;font-size:7.4px;color:#484848">body</div><div class="t" style="left:707px;top:562.5px;font-size:7.4px;color:#484848">p</div>
</body></html>
